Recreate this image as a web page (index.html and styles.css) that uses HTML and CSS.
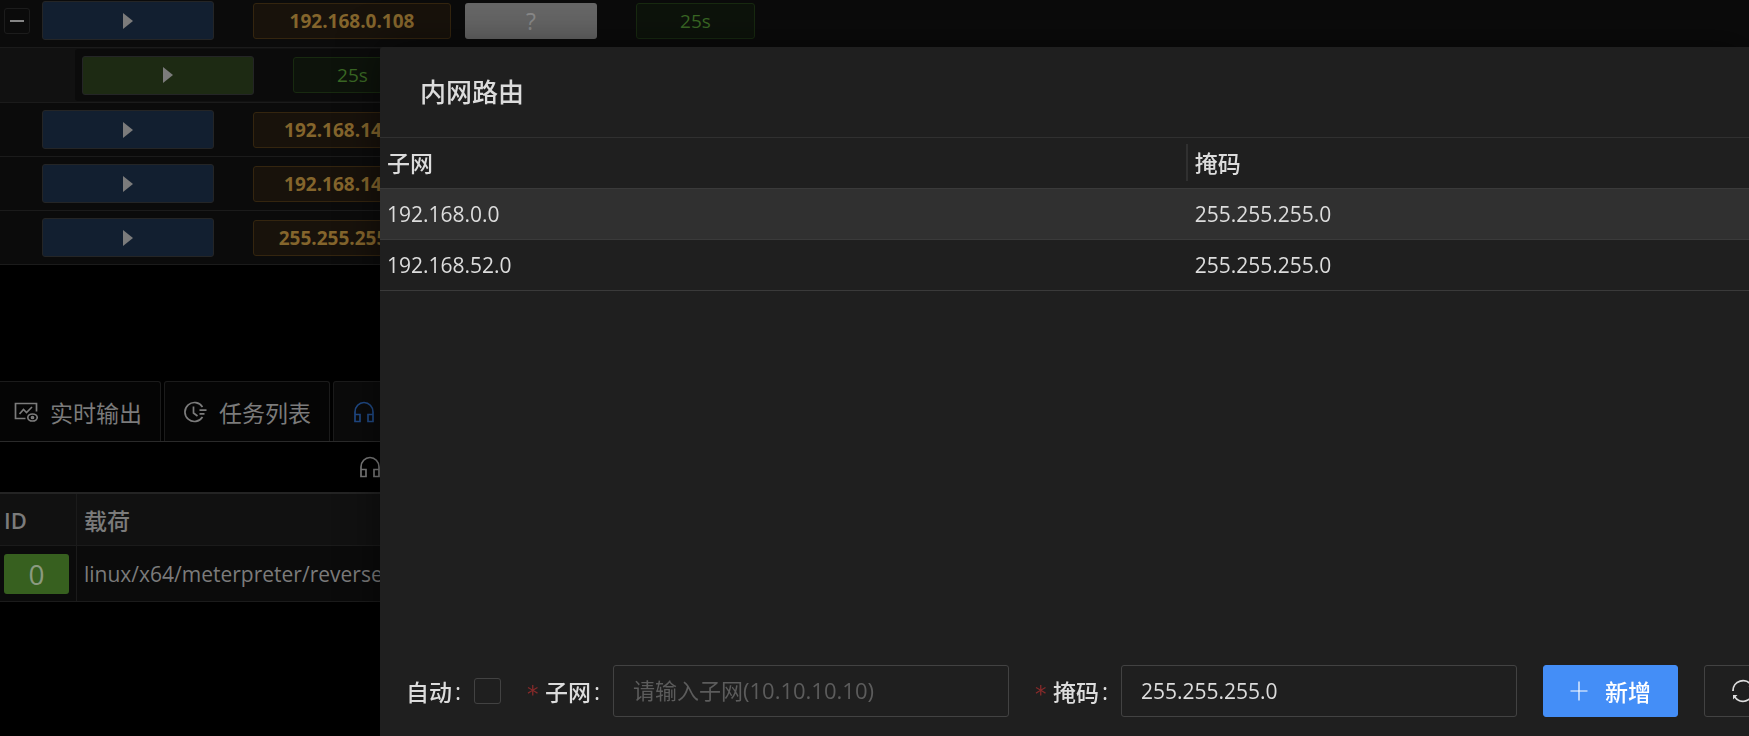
FILE: index.html
```html
<!DOCTYPE html>
<html lang="zh-CN">
<head>
  <meta charset="UTF-8" />
  <meta name="viewport" content="width=device-width, initial-scale=1.0" />
  <title>内网路由</title>
  <link rel="stylesheet" href="styles.css">
</head>

<body>
  <!-- Shared icons -->
  <svg class="icon-defs" aria-hidden="true">
    <symbol id="play" viewBox="0 0 10 16"><path d="M0 0 L10 8 L0 16 Z" fill="currentColor" /></symbol>
    <symbol id="headset" viewBox="0 0 24 24">
      <path d="M3 21.5 V12 a9 9.5 0 0 1 18 0 V21.5 M3 14.5 H8 V21.5 H3 Z M16 14.5 H21 V21.5 H16 Z" fill="none" stroke="currentColor" stroke-width="1.7" />
    </symbol>
  </svg>

  <main class="page">
    <section class="sessions">
      <div class="session-row first">
        <div class="expand-cell"><button class="expand" type="button" aria-label="收起"></button></div>
        <button class="run blue" type="button" aria-label="会话"><svg><use href="#play" /></svg></button>
        <span class="tag ip">192.168.0.108</span>
        <button class="unknown" type="button">?</button>
        <span class="tag time">25s</span>
      </div>
      <div class="session-row nested">
        <div class="nested-panel">
          <button class="run green" type="button" aria-label="会话"><svg><use href="#play" /></svg></button>
          <span class="tag time">25s</span>
        </div>
      </div>
      <div class="session-row">
        <div class="expand-cell"></div>
        <button class="run blue" type="button" aria-label="会话"><svg><use href="#play" /></svg></button>
        <span class="tag ip">192.168.146.10</span>
      </div>
      <div class="session-row">
        <div class="expand-cell"></div>
        <button class="run blue" type="button" aria-label="会话"><svg><use href="#play" /></svg></button>
        <span class="tag ip">192.168.146.11</span>
      </div>
      <div class="session-row">
        <div class="expand-cell"></div>
        <button class="run blue" type="button" aria-label="会话"><svg><use href="#play" /></svg></button>
        <span class="tag ip">255.255.255.255</span>
      </div>
    </section>

    <nav class="tabs">
      <button class="tab" type="button">
        <svg viewBox="0 0 24 24" fill="none" stroke="currentColor" stroke-width="1.7">
          <path d="M11.5 18.5 H1.5 V3.5 H22.5 V11.5" />
          <path d="M5.5 14 L9.5 9.5 L12.5 12.5 L18 7" />
          <ellipse cx="18.5" cy="17.5" rx="4.7" ry="3.5" />
          <circle cx="18.5" cy="17.5" r="1" />
        </svg>
        实时输出
      </button>
      <button class="tab" type="button">
        <svg viewBox="0 0 24 24" fill="none" stroke="currentColor" stroke-width="1.7">
          <path d="M19.5 7 A9.5 9.5 0 1 0 19.5 17" />
          <path d="M10.5 6.5 V13 L14.5 16 M16.5 10.2 H23.5 M16.5 13.8 H21.5" />
        </svg>
        任务列表
      </button>
      <button class="tab active" type="button" aria-label="监听"><svg><use href="#headset" /></svg></button>
    </nav>

    <div class="toolbar">
      <button type="button" aria-label="新增监听"><svg><use href="#headset" /></svg></button>
    </div>

    <table class="payloads">
      <thead>
        <tr><th class="id-col">ID</th><th>载荷</th></tr>
      </thead>
      <tbody>
        <tr><td class="id-cell"><span class="id-badge">0</span></td><td>linux/x64/meterpreter/reverse_tcp</td></tr>
      </tbody>
    </table>
  </main>

  <section class="modal" role="dialog" aria-labelledby="modal-title">
    <header class="modal-header">
      <h1 id="modal-title">内网路由</h1>
    </header>

    <table class="routes">
      <thead>
        <tr><th>子网</th><th>掩码</th></tr>
      </thead>
      <tbody>
        <tr class="hover"><td>192.168.0.0</td><td>255.255.255.0</td></tr>
        <tr><td>192.168.52.0</td><td>255.255.255.0</td></tr>
      </tbody>
    </table>

    <form class="route-form">
      <div class="field">
        <label for="auto">自动<span class="colon">:</span></label>
        <input type="checkbox" id="auto">
      </div>
      <div class="field">
        <label for="subnet"><span class="required">*</span>子网<span class="colon">:</span></label>
        <input type="text" id="subnet" placeholder="请输入子网(10.10.10.10)">
      </div>
      <div class="field">
        <label for="netmask"><span class="required">*</span>掩码<span class="colon">:</span></label>
        <input type="text" id="netmask" value="255.255.255.0">
      </div>
      <button class="btn primary" type="button">
        <svg viewBox="0 0 18 20"><path d="M0.5 10 H17.5 M9 0.5 V19.5" fill="none" stroke="currentColor" stroke-width="1.2" /></svg>
        新增
      </button>
      <button class="btn" type="button" aria-label="刷新">
        <svg viewBox="0 0 24 24" fill="none" stroke="currentColor" stroke-width="1.8">
          <path d="M2 12 A10 10 0 0 1 20.5 6.5 M22 12 A10 10 0 0 1 3.5 17.5" />
          <path d="M22 3.5 V8 H17.5 Z M2 20.5 V16 H6.5 Z" fill="currentColor" stroke="none" />
        </svg>
      </button>
    </form>
  </section>
</body>
</html>
```
FILE: styles.css
```css
:root {
  --panel: #1f1f1f;
  --row: #0b0b0b;
  --line: #1b1b1b;
  --text: #dcdcdc;
  --dim: #7b7b7b;
  --latin: "Open Sans", "Noto Sans CJK SC", sans-serif;
}

* {
  box-sizing: border-box;
}

body {
  margin: 0;
  min-height: 100vh;
  background: #000;
  color: var(--text);
  font-family: var(--latin);
  font-size: 23px;
  overflow: hidden;
}

button,
input {
  font: inherit;
  color: inherit;
  margin: 0;
}

button {
  padding: 0;
  background: none;
  border: none;
  cursor: pointer;
}

.icon-defs {
  display: none;
}

.page {
  color: var(--dim);
}

/* Sessions */
.session-row {
  display: flex;
  align-items: center;
  height: 54px;
  background: var(--row);
  border-bottom: 1px solid var(--line);
}

.session-row.first {
  height: 48px;
  padding-bottom: 6px;
}

.session-row.nested {
  height: 55px;
  padding-left: 75px;
  background: #111;
}

.nested-panel {
  display: flex;
  flex: 1;
  align-items: center;
  height: 52px;
  padding-left: 7px;
  background: var(--row);
  border-radius: 3px;
}

.expand-cell {
  width: 42px;
  padding-left: 4px;
}

.expand {
  display: flex;
  align-items: center;
  justify-content: center;
  width: 26px;
  height: 26px;
  border: 1px solid #1c1c1c;
  border-radius: 3px;
}

.expand::before {
  content: "";
  width: 14px;
  height: 2px;
  background: #858585;
}

.run {
  display: flex;
  align-items: center;
  justify-content: center;
  width: 172px;
  height: 39px;
  margin-right: 39px;
  border: 1px solid #242526;
  border-radius: 3px;
}

.run svg {
  width: 10px;
  height: 16px;
}

.run.blue {
  background: #121f30;
}

.run.green {
  background: #1d2a13;
}

.tag {
  display: flex;
  align-items: center;
  justify-content: center;
  height: 36px;
  border: 1px solid;
  border-radius: 3px;
}

.tag.ip {
  width: 198px;
  background: #18120b;
  border-color: #34250f;
  color: #84652c;
  font-size: 19px;
  font-weight: 700;
}

.tag.time {
  width: 119px;
  margin-left: 39px;
  background: #0d130b;
  border-color: #182a10;
  color: #3a6824;
  font-size: 19px;
}

.nested-panel .tag.time {
  margin-left: 0;
}

.unknown {
  width: 132px;
  height: 36px;
  margin-left: 14px;
  background: #666;
  border-radius: 3px;
  color: #8a8a8a;
  font-size: 23px;
  font-weight: 400;
  line-height: 36px;
}

/* Bottom tabs */
.tabs {
  display: flex;
  gap: 3px;
  height: 61px;
  margin-top: 116px;
  margin-left: -5px;
  border-bottom: 1px solid #2a2a2a;
}

.tab {
  display: flex;
  align-items: center;
  gap: 12px;
  padding: 0 18px;
  background: #050505;
  border: 1px solid var(--line);
  border-bottom: none;
  border-radius: 3px 3px 0 0;
  white-space: nowrap;
}

.tab svg,
.toolbar svg {
  display: block;
  width: 24px;
  height: 24px;
}

.tab.active {
  background: var(--row);
  color: #204a86;
}

.toolbar {
  display: flex;
  align-items: center;
  height: 52px;
  padding-left: 358px;
  border-bottom: 2px solid #242424;
}

/* Payload table */
.payloads,
.routes {
  width: 100%;
  border-collapse: separate;
  border-spacing: 0;
  table-layout: fixed;
}

.payloads th,
.payloads td {
  padding: 0 7px;
  border-bottom: 1px solid var(--line);
  text-align: left;
}

.payloads th {
  height: 52px;
  background: #111;
  font-weight: 500;
}

.payloads th:first-child,
.payloads td:first-child {
  border-right: 1px solid var(--line);
}

.payloads .id-col {
  width: 77px;
  padding-left: 4px;
  font-size: 22px;
  font-weight: 600;
}

.payloads td {
  height: 56px;
  background: var(--row);
  font-size: 21px;
}

.payloads .id-cell {
  padding: 0 7px 0 4px;
}

.id-badge {
  display: block;
  height: 40px;
  background: #37601f;
  border-radius: 3px;
  color: #8b9a80;
  font-size: 28px;
  line-height: 40px;
  text-align: center;
}

/* Route dialog, over the page */
.modal {
  position: fixed;
  top: 47px;
  right: 0;
  bottom: 0;
  left: 380px;
  display: flex;
  flex-direction: column;
  background: var(--panel);
  border-top-left-radius: 3px;
  box-shadow: 0 0 40px rgba(0, 0, 0, 0.5);
  overflow: hidden;
}

.modal-header {
  display: flex;
  align-items: center;
  height: 91px;
  padding: 0 40px 2px;
  border-bottom: 1px solid #303030;
}

.modal-header h1 {
  margin: 0;
  font-size: 26px;
  font-weight: 500;
}

.routes th,
.routes td {
  height: 51px;
  padding: 0 7px;
  border-bottom: 1px solid #3a3a3a;
  text-align: left;
}

.routes th {
  position: relative;
  padding-bottom: 2px;
  font-weight: 500;
}

.routes th:first-child {
  width: 59%;
}

.routes th:first-child::after {
  content: "";
  position: absolute;
  top: 6px;
  right: 0;
  width: 2px;
  height: 37px;
  background: #303030;
}

.routes td {
  font-size: 21px;
  font-weight: 500;
}

.routes .hover td {
  background: #303030;
}

.route-form {
  display: flex;
  align-items: center;
  gap: 26px;
  margin-top: auto;
  padding: 0 26px 19px;
  white-space: nowrap;
}

.field {
  display: flex;
  flex-shrink: 0;
  align-items: center;
}

.field label {
  display: flex;
  align-items: center;
  font-weight: 500;
}

.colon {
  width: 7px;
  margin: 0 12px 0 3px;
}

.required {
  width: 12px;
  margin-right: 6px;
  padding-top: 6px;
  color: #862a2a;
  font-family: "DejaVu Sans", sans-serif;
  font-size: 23px;
  font-weight: 400;
}

input[type="checkbox"] {
  appearance: none;
  width: 27px;
  height: 26px;
  border: 1px solid #424242;
  border-radius: 3px;
}

input[type="text"] {
  width: 396px;
  height: 52px;
  padding: 0 19px;
  background: transparent;
  border: 1px solid #424242;
  border-radius: 3px;
  font-size: 21px;
  font-weight: 500;
  outline: none;
}

input::placeholder {
  color: #5c5c5c;
  font-size: 22px;
  font-weight: 400;
  opacity: 1;
}

.btn {
  display: flex;
  flex-shrink: 0;
  align-items: center;
  gap: 17px;
  height: 52px;
  padding: 0 26px;
  border: 1px solid #424242;
  border-radius: 3px;
}

.btn svg {
  width: 24px;
  height: 24px;
}

.btn.primary {
  background: #448ef7;
  border-color: #448ef7;
  color: #fff;
  font-weight: 500;
}

.btn.primary svg {
  width: 18px;
  height: 20px;
}
```
